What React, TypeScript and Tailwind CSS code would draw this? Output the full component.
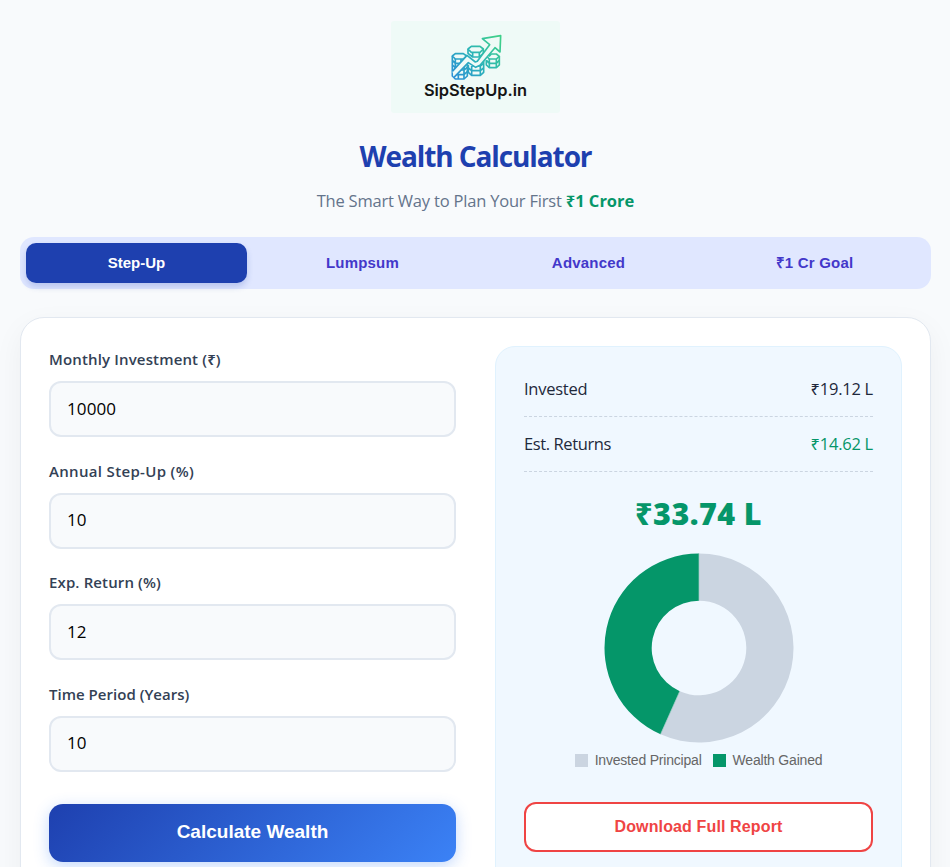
import React from 'react';

const TABS = ['Step-Up', 'Lumpsum', 'Advanced', '₹1 Cr Goal'];

interface Field {
  id: string;
  label: string;
  value: string;
  labelClass: string;
}

const FIELDS: Field[] = [
  { id: 'monthly', label: 'Monthly Investment (₹)', value: '10000', labelClass: 'tracking-[0.15px]' },
  { id: 'stepup', label: 'Annual Step-Up (%)', value: '10', labelClass: 'tracking-[0.33px]' },
  { id: 'rate', label: 'Exp. Return (%)', value: '12', labelClass: 'tracking-[0.13px]' },
  { id: 'years', label: 'Time Period (Years)', value: '10', labelClass: 'tracking-[0.02px]' },
];

const Logo: React.FC = () => (
  <div className="flex h-[92px] w-[169px] flex-col items-center rounded-[3px] bg-[#effaf7] pt-[9px]">
    <svg className="h-[54px] w-[62px]" viewBox="0 0 186 162" fill="none">
      <defs>
        <linearGradient id="logo-stroke" gradientUnits="userSpaceOnUse" x1="25" y1="145" x2="160" y2="25">
          <stop offset="0" stopColor="#2c8fd6" />
          <stop offset="0.5" stopColor="#2bb3b8" />
          <stop offset="1" stopColor="#3ecf8a" />
        </linearGradient>
      </defs>
      <g stroke="url(#logo-stroke)" strokeWidth="5" strokeLinejoin="round">
        {/* left stack */}
        <path d="M22 78 L31 71 H55 L65 78 L55 87 H31 Z" />
        <path d="M22 78 V138 L31 147 H57 L67 138 V92" />
        <path d="M22 91 L31 100 H48 M22 105 L31 113 H40 M31 87 V113 M48 87 V100" />
        <path d="M44 120 H57 L67 112 M36 134 H57 L67 125 M57 106 V147 M40 132 V147" />
        {/* middle stack */}
        <path d="M69 57 L79 49 H105 L115 57 L105 67 H79 Z" />
        <path d="M69 57 V70 L83 81 H103 L115 70 V57 M83 67 V81 M103 67 V81" />
        <path d="M70 104 V127 L80 136 H106 L116 127 V92" />
        <path d="M70 114 L80 122 H106 L116 114 M82 108 H106 L116 100 M80 108 V136 M106 102 V136" />
        {/* right stack */}
        <path d="M132 79 L139 72 H154 L163 79 L154 87 H133 L127 81" />
        <path d="M163 79 V105 L154 113 H133 L124 105 V90" />
        <path d="M124 91 L133 100 H154 L163 91 M133 87 V113 M154 87 V113" />
      </g>
      {/* rising arrow */}
      <path
        d="M22 124 L66 76 L91 96 L97 94 L134 46 L128 33 L112 26 L167 15 L165 66 L150 53 L105 106 L92 112 L70 98 L27 142 Z"
        fill="#effaf7"
      />
      <path
        d="M22 124 L66 76 L91 96 L97 94 L134 44 L112 26 L167 17 L165 66 L150 53 L105 106 L92 112 L70 98 L27 142"
        stroke="url(#logo-stroke)"
        strokeWidth="5"
        strokeLinejoin="round"
      />
    </svg>
    <span className="-mt-[5px] font-['Inter',sans-serif] text-[16.4px] leading-[22px] font-semibold text-[#151515]">
      SipStepUp.in
    </span>
  </div>
);

const Tabs: React.FC = () => (
  <nav className="mt-[23px] grid h-[52px] grid-cols-4 gap-[5px] rounded-[14px] bg-[#e0e7ff] p-1.5 font-['Liberation_Sans',Arial,sans-serif] text-[15px] font-bold tracking-[0.2px]">
    {TABS.map((tab, index) => (
      <button
        key={tab}
        className={
          index === 0
            ? 'rounded-[10px] bg-[#1e40af] tracking-[0px] text-white shadow-[0_4px_6px_rgba(30,64,175,0.2)]'
            : 'rounded-[10px] text-[#4338ca]'
        }
      >
        {tab}
      </button>
    ))}
  </nav>
);

const InvestmentForm: React.FC = () => (
  <div>
    {FIELDS.map((field) => (
      <div key={field.id} className="mb-[20.67px] h-[91px]">
        <label
          htmlFor={field.id}
          className={`block h-[35px] text-[15px] leading-[26px] font-semibold text-[#334155] ${field.labelClass}`}
        >
          {field.label}
        </label>
        <input
          id={field.id}
          defaultValue={field.value}
          className="block h-14 w-full rounded-xl border-2 border-[#e2e8f0] bg-[#f8fafc] px-4 pb-0.5 text-[17px] tracking-[0.1px] text-black outline-none"
        />
      </div>
    ))}
    <button className="mt-[11px] h-[58px] w-full rounded-[14px] bg-[linear-gradient(135deg,#1e40af,#3b82f6)] font-['Liberation_Sans',Arial,sans-serif] text-[19px] font-bold text-white shadow-[0_4px_15px_rgba(59,130,246,0.3)]">
      Calculate Wealth
    </button>
  </div>
);

// 19.12 L invested out of 33.74 L
const DonutChart: React.FC = () => {
  const angle = (19.12 / 33.74) * 2 * Math.PI;
  const x = Math.sin(angle);
  const y = -Math.cos(angle);
  const ring = (large: number, sweep: number) =>
    `M0 -94.5 A94.5 94.5 0 ${large} ${sweep} ${94.5 * x} ${94.5 * y} L${47.3 * x} ${47.3 * y} A47.3 47.3 0 ${large} ${1 - sweep} 0 -47.3 Z`;

  return (
    <svg className="mx-auto block h-[190px] w-[190px]" viewBox="-95 -95 190 190">
      <path d={ring(1, 1)} fill="#cbd5e1" />
      <path d={ring(0, 0)} fill="#059669" />
      <path d={`M0 -94.5 V-47.3 M${47.3 * x} ${47.3 * y} L${94.5 * x} ${94.5 * y}`} stroke="#a5cdc8" strokeWidth="0.7" />
    </svg>
  );
};

const ResultPanel: React.FC = () => (
  <div className="h-[600px] rounded-[20px] border border-[#e0f2fe] bg-[#f0f8ff] px-7 pt-[15px]">
    <div className="flex h-[55px] items-center justify-between border-b border-dashed border-[#cbd5e1] text-[16.5px] tracking-[-0.25px] text-[#1e293b]">
      <span>Invested</span>
      <span>₹19.12 L</span>
    </div>
    <div className="flex h-[55px] items-center justify-between border-b border-dashed border-[#cbd5e1] text-[16.5px] tracking-[-0.25px] text-[#1e293b]">
      <span className="tracking-[-0.4px]">Est. Returns</span>
      <span className="text-[#059669]">₹14.62 L</span>
    </div>
    <div className="mt-5 text-center text-[30.5px] leading-[43px] font-extrabold tracking-[0.4px] text-[#059669]">
      ₹33.74 L
    </div>
    <div className="mt-[18px]">
      <DonutChart />
    </div>
    <div className="mt-2 flex h-[18px] items-center justify-center font-['Liberation_Sans',Arial,sans-serif] text-[14px] tracking-[-0.2px] text-[#666]">
      <span className="mr-[7px] h-[13px] w-[13px] bg-[#cbd5e1]" />
      <span>Invested Principal</span>
      <span className="mr-[7px] ml-[11px] h-[13px] w-[13px] bg-[#059669]" />
      <span>Wealth Gained</span>
    </div>
    <button className="mt-[33px] h-[50px] w-full rounded-xl border-2 border-[#ef4444] bg-white font-['Liberation_Sans',Arial,sans-serif] text-base font-bold tracking-[0.13px] text-[#ef4444]">
      Download Full Report
    </button>
  </div>
);

const App: React.FC = () => {
  return (
    <div className="h-[867px] overflow-hidden bg-[#f8fafc] pt-[21px] pl-5 font-['Open_Sans','Noto_Sans',sans-serif]">
      <div className="w-[911px]">
        <header className="flex flex-col items-center">
          <Logo />
          <h1 className="mt-6 text-[28px] leading-[38px] font-bold tracking-[-1.1px] text-[#1e40af]">
            Wealth Calculator
          </h1>
          <p className="mt-[13px] text-[16.5px] leading-[26px] tracking-[-0.2px] text-[#64748b]">
            The Smart Way to Plan Your First{' '}
            <strong className="font-bold tracking-[0px] text-[#059669]">₹1 Crore</strong>
          </p>
        </header>

        <Tabs />

        <main className="mt-7 grid h-[660px] grid-cols-2 gap-[39px] rounded-3xl border border-[#e2e8f0] bg-white p-7 shadow-[0_10px_30px_rgba(0,0,0,0.05)]">
          <InvestmentForm />
          <ResultPanel />
        </main>
      </div>
    </div>
  );
};

export default App;
